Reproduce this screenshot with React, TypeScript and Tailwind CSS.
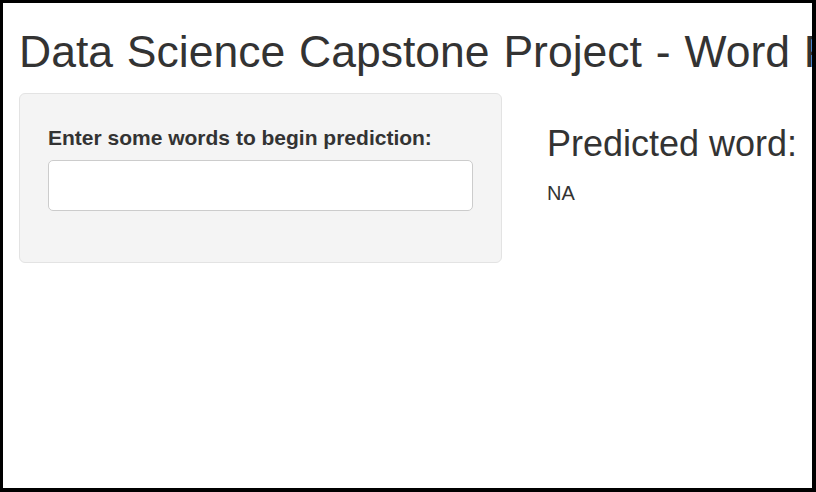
import React from "react";

const App: React.FC = () => {
  return (
    <div className="w-[816px] h-[492px] bg-black pl-[3px] pt-[3px] pr-[4px] pb-[4px]">
      <div
        className="w-full h-full bg-white overflow-hidden text-[#333]"
        style={{ fontFamily: '"Liberation Sans", Arial, sans-serif' }}
      >
        <div className="w-[1200px] pl-[16px]">
          {/* Title */}
          <h2 className="text-[44.5px] leading-[48px] font-normal pt-[25px] mb-[17px] whitespace-nowrap [word-spacing:1.5px]">
            Data Science Capstone Project - Word Prediction
          </h2>

          <div className="flex items-start">
            {/* Sidebar */}
            <div className="w-[483px] h-[170px] bg-[#f4f4f4] border border-[#e3e3e3] rounded-[6px] px-[28px] pt-[32px]">
              <label className="block text-[21px] leading-[24px] font-bold mb-[10px] whitespace-nowrap">
                Enter some words to begin prediction:
              </label>
              <input
                type="text"
                className="w-[425px] h-[51px] bg-white border border-[#cccccc] rounded-[5px] px-3 focus:outline-none"
              />
            </div>

            {/* Main */}
            <div className="ml-[45px] pt-[31px]">
              <h3 className="text-[36px] leading-[40px] font-normal mb-[17px] whitespace-nowrap">
                Predicted word:
              </h3>
              <div className="text-[20px] leading-[24px]">NA</div>
            </div>
          </div>
        </div>
      </div>
    </div>
  );
};

export default App;
